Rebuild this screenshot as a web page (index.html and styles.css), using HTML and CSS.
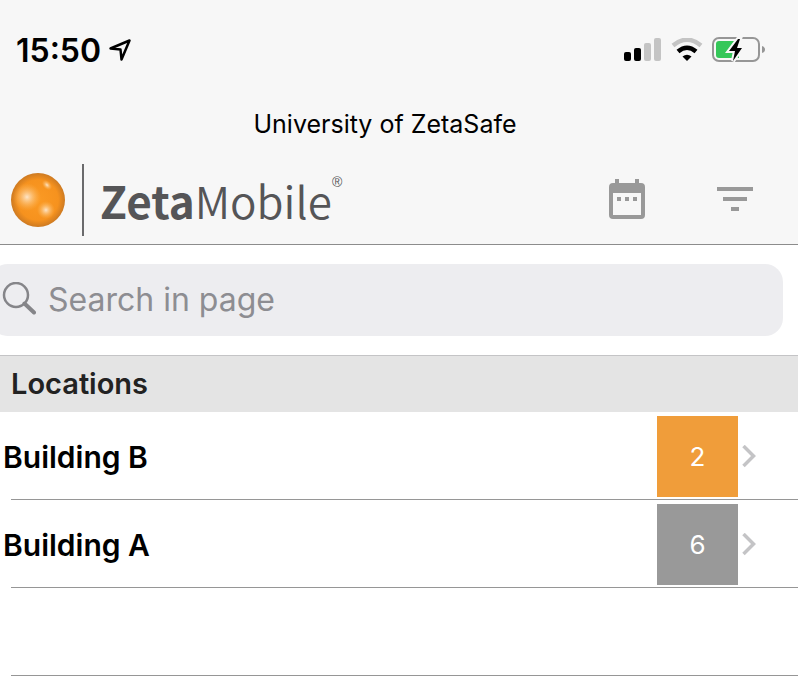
FILE: index.html
```html
<!DOCTYPE html>
<html lang="en">
<head>
    <meta charset="UTF-8">
    <meta name="viewport" content="width=device-width, initial-scale=1">
    <title>ZetaMobile</title>
    <link rel="stylesheet" href="styles.css">
</head>
<body>
    <header class="header">
        <!-- Status bar -->
        <div class="status-bar">
            <span class="status-time">15:50</span>
            <svg class="status-location" width="22" height="22" viewBox="0 0 22 22" aria-hidden="true">
                <path d="M1.5 9.5 L20.5 1.5 L12.5 20.5 L11.5 10.5 Z" fill="none" stroke="#000" stroke-width="2.5" stroke-linejoin="round"/>
            </svg>
            <div class="status-icons">
                <svg width="38" height="24" viewBox="0 0 38 24" aria-hidden="true">
                    <rect x="0" y="14" width="7" height="9" rx="2" fill="#000"/>
                    <rect x="10" y="10" width="7" height="13" rx="2" fill="#000"/>
                    <rect x="20" y="5" width="7" height="18" rx="2" fill="#c4c4c4"/>
                    <rect x="30" y="0" width="7" height="23" rx="2" fill="#c4c4c4"/>
                </svg>
                <svg width="32" height="24" viewBox="0 0 32 24" aria-hidden="true">
                    <path d="M2 7.5 Q16 -4 30 7.5" fill="none" stroke="#c4c4c4" stroke-width="4.5"/>
                    <path d="M7 13.5 Q16 6 25 13.5" fill="none" stroke="#000" stroke-width="4.5"/>
                    <path d="M11.5 18.5 Q16 15 20.5 18.5 L16 23 Z" fill="#000"/>
                </svg>
                <svg width="54" height="26" viewBox="0 0 54 26" aria-hidden="true">
                    <rect x="1" y="1" width="46" height="23" rx="6" fill="none" stroke="#969696" stroke-width="2"/>
                    <path d="M7 4 H27 V21 H7 Q4 21 4 18 V7 Q4 4 7 4 Z" fill="#35c759"/>
                    <path d="M50 9 Q53 10 53 12.5 Q53 15 50 16 Z" fill="#969696"/>
                    <path d="M26 2 L17 14 H23 L21 24 L30 11 H25 L28 2 Z" fill="#000" stroke="#f7f7f7" stroke-width="4" paint-order="stroke"/>
                </svg>
            </div>
        </div>
        <div class="site-name">University of ZetaSafe</div>
        <div class="toolbar">
            <div class="logo">
                <svg class="logo-ball" width="56" height="56" viewBox="0 0 56 56" aria-hidden="true">
                    <defs>
                        <radialGradient id="ball">
                            <stop offset="0" stop-color="#fb9a24"/>
                            <stop offset="0.75" stop-color="#f6921e"/>
                            <stop offset="1" stop-color="#cd7a22"/>
                        </radialGradient>
                        <radialGradient id="shine">
                            <stop offset="0" stop-color="#fff" stop-opacity="0.75"/>
                            <stop offset="1" stop-color="#ffc36b" stop-opacity="0"/>
                        </radialGradient>
                    </defs>
                    <circle cx="28" cy="28" r="27" fill="url(#ball)"/>
                    <circle cx="17" cy="25" r="14" fill="url(#shine)"/>
                    <circle cx="36" cy="38" r="9" fill="url(#shine)"/>
                    <ellipse cx="37" cy="13" rx="6" ry="4" fill="url(#shine)" transform="rotate(45 37 13)"/>
                </svg>
                <div class="logo-text"><strong>Zeta</strong>Mobile</div>
                <span class="logo-mark">®</span>
            </div>
            <div class="toolbar-buttons">
                <button type="button" class="icon-button" aria-label="Calendar">
                    <svg width="36" height="40" viewBox="0 0 36 40" aria-hidden="true">
                        <path fill="#999" fill-rule="evenodd" d="M6 0 H10 V4 H26 V0 H30 V4 H32 Q36 4 36 8 V36 Q36 40 32 40 H4 Q0 40 0 36 V8 Q0 4 4 4 H6 Z M4 14 V36 H32 V14 Z"/>
                        <path fill="#999" d="M8 18h4v4h-4z M16 18h4v4h-4z M24 18h4v4h-4z"/>
                    </svg>
                </button>
                <button type="button" class="icon-button" aria-label="Filter">
                    <svg width="36" height="24" viewBox="0 0 36 24" aria-hidden="true">
                        <path fill="#999" d="M0 0h36v4H0z M6 10h24v4H6z M14 20h8v4h-8z"/>
                    </svg>
                </button>
            </div>
        </div>
    </header>
    <main>
        <label class="search">
            <svg width="34" height="34" viewBox="0 0 34 34" aria-hidden="true">
                <circle cx="14" cy="13" r="12" fill="none" stroke="#858589" stroke-width="2.5"/>
                <path d="M22.5 21.5 L32 30.500" stroke="#858589" stroke-width="4" stroke-linecap="round"/>
            </svg>
            <input type="search" class="search-input" placeholder="Search in page" aria-label="Search in page">
        </label>
        <h2 class="list-title">Locations</h2>
        <ul class="list">
            <li class="list-row">
                <a href="#building-b" class="list-link">
                    <span class="list-name">Building B</span>
                    <span class="badge badge-orange">2</span>
                    <svg class="chevron" width="14" height="24" viewBox="0 0 14 24" aria-hidden="true">
                        <path d="M1.5 1 L11.5 11 L1.5 21" fill="none" stroke="#c4c4c6" stroke-width="3.5"/>
                    </svg>
                </a>
            </li>
            <li class="list-row">
                <a href="#building-a" class="list-link">
                    <span class="list-name">Building A</span>
                    <span class="badge badge-grey">6</span>
                    <svg class="chevron" width="14" height="24" viewBox="0 0 14 24" aria-hidden="true">
                        <path d="M1.5 1 L11.5 11 L1.5 21" fill="none" stroke="#c4c4c6" stroke-width="3.5"/>
                    </svg>
                </a>
            </li>
            <li class="list-row"></li>
        </ul>
    </main>
</body>
</html>
```
FILE: styles.css
```css
* {
    box-sizing: border-box;
}
body {
    margin: 0;
    font-family: Inter, "Liberation Sans", sans-serif;
    color: #000;
    background: #fff;
    overflow-x: hidden;
}
.header {
    background: #f7f7f7;
    border-bottom: 1px solid #8c8c8c;
}
.status-bar {
    display: flex;
    align-items: center;
    height: 100px;
    padding: 0 32px 0 16px;
}
.status-time {
    font-size: 32px;
    font-weight: 600;
}
.status-location {
    margin-left: 8px;
}
.status-icons {
    display: flex;
    align-items: center;
    gap: 9px;
    margin-left: auto;
}
.site-name {
    padding-right: 28px;
    font-size: 25px;
    line-height: 48px;
    text-align: center;
}
.toolbar {
    display: flex;
    align-items: center;
    justify-content: space-between;
    padding: 16px 45px 8px 10px;
}
.logo {
    display: flex;
    align-items: center;
    color: #555557;
}
.logo-text {
    margin-left: 16px;
    padding-left: 16px;
    border-left: 2px solid #6a6a6c;
    font-family: "Noto Sans CJK JP", "Noto Sans", sans-serif;
    font-size: 44px;
    font-weight: 350;
    line-height: 72px;
}
.logo-text strong {
    font-weight: 700;
}
.logo-mark {
    align-self: flex-start;
    margin-top: 8px;
    font-family: "Liberation Sans", sans-serif;
    font-size: 14px;
    line-height: 20px;
}
.toolbar-buttons {
    display: flex;
    align-items: center;
    gap: 72px;
    padding-bottom: 2px;
}
.icon-button {
    display: flex;
    padding: 0;
    border: 0;
    background: none;
    cursor: pointer;
}
/* The field runs off the left edge of the screen */
.search {
    display: flex;
    align-items: center;
    gap: 12px;
    height: 72px;
    margin: 19px 15px 19px -10px;
    padding: 0 0 2px 12px;
    border-radius: 18px;
    background: #ededf0;
}
.search-input {
    flex: 1;
    min-width: 0;
    padding: 0;
    border: 0;
    outline: 0;
    background: none;
    font-family: inherit;
    font-size: 32px;
}
.search-input::placeholder {
    color: #8d8d92;
}
.list-title {
    margin: 0;
    padding-left: 11px;
    border-top: 1px solid #c4c4c6;
    background: #e4e4e4;
    color: #222;
    font-size: 29px;
    font-weight: 600;
    line-height: 56px;
}
.list {
    margin: 0 0 0 11px;
    padding: 0;
    list-style: none;
}
.list-row {
    height: 88px;
    border-bottom: 1px solid #969696;
}
.list-link {
    display: flex;
    align-items: center;
    margin-left: -8px;
    padding: 4px 42px 2px 0;
    color: #000;
    text-decoration: none;
}
.list-name {
    flex: 1;
    font-size: 30px;
    font-weight: 600;
}
.badge {
    width: 81px;
    color: #fff;
    font-size: 26px;
    line-height: 81px;
    text-align: center;
}
.badge-orange {
    background: #f09d3a;
}
.badge-grey {
    background: #999;
}
.chevron {
    margin-left: 4px;
}
```
